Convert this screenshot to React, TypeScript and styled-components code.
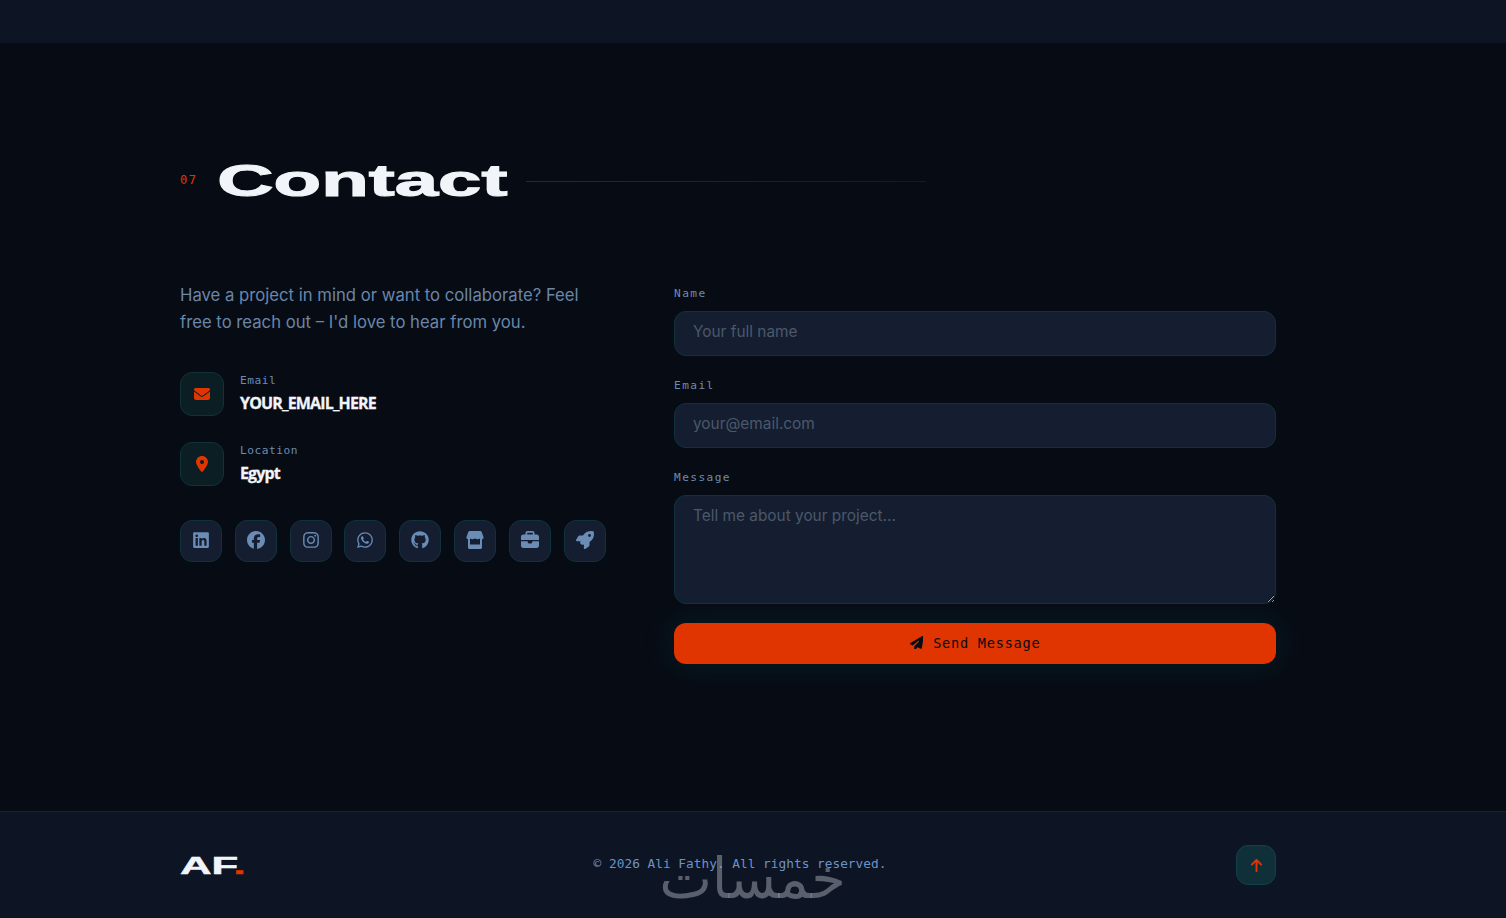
import React from "react";
import styled, { createGlobalStyle } from "styled-components";
import {
  FaLinkedin, FaFacebook, FaInstagram, FaWhatsapp, FaGithub, FaBriefcase, FaRocket,
  FaEnvelope, FaLocationDot, FaPaperPlane, FaArrowUp,
} from "react-icons/fa6";

const mono = `"DejaVu Sans Mono", "Liberation Mono", monospace`;
const body = `"Inter", "Lato", sans-serif`;

const Global = createGlobalStyle`
  html, body { margin: 0; padding: 0; background: #070b14; }
  * { box-sizing: border-box; }
  body { font-family: ${body}; overflow: hidden; }
  input::placeholder, textarea::placeholder { color: #4b586c; opacity: 1; }
`;

const Page = styled.div`
  width: 1506px;
  height: 918px;
  display: flex;
  flex-direction: column;
  position: relative;
  overflow: hidden;
`;
const TopBar = styled.div`
  height: 43px;
  background: #0d1424;
`;
const Section = styled.section`
  height: 768px;
  padding: 111px 230px 0 180px;
`;
const Container = styled.div`
  width: 1096px;
`;
const TitleRow = styled.div`
  display: flex;
  align-items: center;
  height: 54px;
  margin-bottom: 74px;
`;
const Num = styled.span`
  font-family: ${mono};
  font-size: 12px;
  line-height: 14px;
  letter-spacing: 1.6px;
  color: #e03500;
  width: 39px;
  margin-top: -2px;
`;
const TitleBox = styled.h2`
  margin: 0;
  width: 289px;
  height: 54px;
  font: 700 44.8px/52px "Liberation Sans", sans-serif;
  color: #f1f5f9;
`;
const TitleText = styled.span`
  display: inline-block;
  transform: scaleX(1.74) translateX(-1px);
  transform-origin: left center;
  -webkit-text-stroke: 1.1px #f1f5f9;
`;
const TitleLine = styled.div`
  width: 400px;
  height: 1px;
  margin-left: 18px;
  background: linear-gradient(90deg, #12323c, #0e1c28);
`;
const Grid = styled.div`
  display: grid;
  grid-template-columns: 430px 602px;
  gap: 64px;
`;
const Left = styled.div`
  display: flex;
  flex-direction: column;
`;
const Intro = styled.p`
  margin: 0 0 36px;
  max-width: 410px;
  font: 400 16.7px/27px ${body};
  color: #6a86aa;
`;
const InfoList = styled.div`
  display: flex;
  flex-direction: column;
  gap: 26px;
  margin-bottom: 34px;
`;
const InfoRow = styled.div`
  display: flex;
  align-items: center;
  gap: 16px;
`;
const InfoIcon = styled.div`
  width: 44px;
  height: 44px;
  border-radius: 12px;
  background: #0a1e24;
  border: 1px solid #10333b;
  display: flex;
  align-items: center;
  justify-content: center;
  color: #e03500;
  font-size: 16px;
`;
const InfoText = styled.div`
  display: flex;
  flex-direction: column;
`;
const InfoLabel = styled.span`
  font: 400 11.2px/16px ${mono};
  letter-spacing: 0.5px;
  color: #6b8cb4;
  margin-bottom: 2px;
`;
const InfoValue = styled.span`
  font: 700 16px/24px "Open Sans", sans-serif;
  letter-spacing: -0.85px;
  color: #f1f5f9;
  -webkit-text-stroke: 0.3px #f1f5f9;
`;
const Socials = styled.div`
  display: flex;
  gap: 12.8px;
`;
const SocialBtn = styled.a`
  width: 42px;
  height: 42px;
  border-radius: 12px;
  background: #141e30;
  border: 1px solid #10333b;
  display: flex;
  align-items: center;
  justify-content: center;
  color: #6b8cb4;
  font-size: 18px;
  padding-bottom: 2px;
`;
const Form = styled.form`
  display: flex;
  flex-direction: column;
  padding-top: 5px;
`;
const Field = styled.div`
  display: flex;
  flex-direction: column;
  margin-bottom: 23px;
`;
const Label = styled.label`
  font: 400 11.2px/14px ${mono};
  letter-spacing: 1.4px;
  color: #6b8cb4;
  margin-bottom: 10px;
`;
const Input = styled.input`
  height: 45px;
  width: 100%;
  border-radius: 12px;
  background: #141e30;
  border: 1px solid #10333b;
  padding: 0 18px 4px;
  font: 400 15.4px ${body};
  color: #f1f5f9;
  outline: none;
`;
const TextArea = styled.textarea`
  height: 109px;
  width: 100%;
  border-radius: 12px;
  background: #141e30;
  border: 1px solid #10333b;
  padding: 10px 18px;
  font: 400 15.4px/20px ${body};
  color: #f1f5f9;
  outline: none;
  resize: vertical;
  display: block;
`;
const SendBtn = styled.button`
  height: 41px;
  margin-top: -4px;
  padding: 0 0 2px;
  border: none;
  border-radius: 12px;
  background: #e03500;
  color: #070b14;
  font: 400 13.6px ${mono};
  letter-spacing: 0.75px;
  display: flex;
  align-items: center;
  justify-content: center;
  gap: 10px;
  box-shadow: 0 0 32px 4px rgba(0, 229, 200, 0.08);
`;
const Footer = styled.footer`
  flex: 1;
  background: #0d1424;
  border-top: 1px solid #182232;
  padding: 0 230px 0 180px;
  display: flex;
  align-items: center;
  justify-content: space-between;
  width: 100%;
`;
const Logo = styled.div`
  width: 64px;
  height: 30px;
  margin-top: 2px;
  font: 700 24px/30px "Liberation Sans", sans-serif;
  color: #f1f5f9;
`;
const LogoText = styled.span`
  display: inline-block;
  transform: scaleX(1.82);
  transform-origin: left center;
  -webkit-text-stroke: 0.5px #f1f5f9;
`;
const LogoDot = styled.span`
  color: #e03500;
  -webkit-text-stroke: 0.5px #e03500;
`;
const Copy = styled.p`
  margin: -3px 0 0 0;
  font: 400 12.8px ${mono};
  color: #6b93c4;
`;
const UpBtn = styled.a`
  width: 40px;
  height: 40px;
  border-radius: 12px;
  background: #0f3038;
  border: 1px solid #14404a;
  display: flex;
  align-items: center;
  justify-content: center;
  color: #e03500;
  font-size: 15px;
`;
const Watermark = styled.div`
  position: absolute;
  left: 655px;
  top: 848px;
  width: 195px;
  text-align: center;
  font: 400 56px/62px "DejaVu Sans", sans-serif;
  color: rgba(160, 165, 175, 0.52);
  pointer-events: none;
`;

const StoreIcon = () => (
  <svg width="20" height="20" viewBox="0 0 20 20" fill="currentColor">
    <path d="M5 1h10c.8 0 1.500.5 1.800 1.200L18.500 7c.3 1.100-.3 2-1.500 2.200V17.500c0 .8-.7 1.500-1.500 1.500h-11C3.700 19 3 18.300 3 17.500V9.200C1.800 9 1.200 8.100 1.500 7L3.200 2.200C3.500 1.500 4.200 1 5 1z" />
    <path d="M5 8.500c1.500 1 3 1 5 0 2 1 3.500 1 5 0V14.500H5z" fill="#141e30" />
  </svg>
);

const socials = [FaLinkedin, FaFacebook, FaInstagram, FaWhatsapp, FaGithub, StoreIcon, FaBriefcase, FaRocket];

export default function App() {
  return (
    <Page>
      <Global />
      <TopBar />
      <Section>
        <Container>
          <TitleRow>
            <Num>07</Num>
            <TitleBox><TitleText>Contact</TitleText></TitleBox>
            <TitleLine />
          </TitleRow>
          <Grid>
            <Left>
              <Intro>Have a project in mind or want to collaborate? Feel free to reach out – I'd love to hear from you.</Intro>
              <InfoList>
                <InfoRow>
                  <InfoIcon><FaEnvelope /></InfoIcon>
                  <InfoText><InfoLabel>Email</InfoLabel><InfoValue>YOUR_EMAIL_HERE</InfoValue></InfoText>
                </InfoRow>
                <InfoRow>
                  <InfoIcon><FaLocationDot /></InfoIcon>
                  <InfoText><InfoLabel>Location</InfoLabel><InfoValue>Egypt</InfoValue></InfoText>
                </InfoRow>
              </InfoList>
              <Socials>
                {socials.map((Icon, i) => <SocialBtn key={i}><Icon /></SocialBtn>)}
              </Socials>
            </Left>
            <Form>
              <Field><Label>Name</Label><Input placeholder="Your full name" /></Field>
              <Field><Label>Email</Label><Input placeholder="your@email.com" /></Field>
              <Field><Label>Message</Label><TextArea placeholder="Tell me about your project..." /></Field>
              <SendBtn type="button"><FaPaperPlane />Send Message</SendBtn>
            </Form>
          </Grid>
        </Container>
      </Section>
      <Footer>
        <Logo><LogoText>AF<LogoDot>.</LogoDot></LogoText></Logo>
        <Copy>© 2026 Ali Fathy. All rights reserved.</Copy>
        <UpBtn><FaArrowUp /></UpBtn>
      </Footer>
      <Watermark>خمسات</Watermark>
    </Page>
  );
}
